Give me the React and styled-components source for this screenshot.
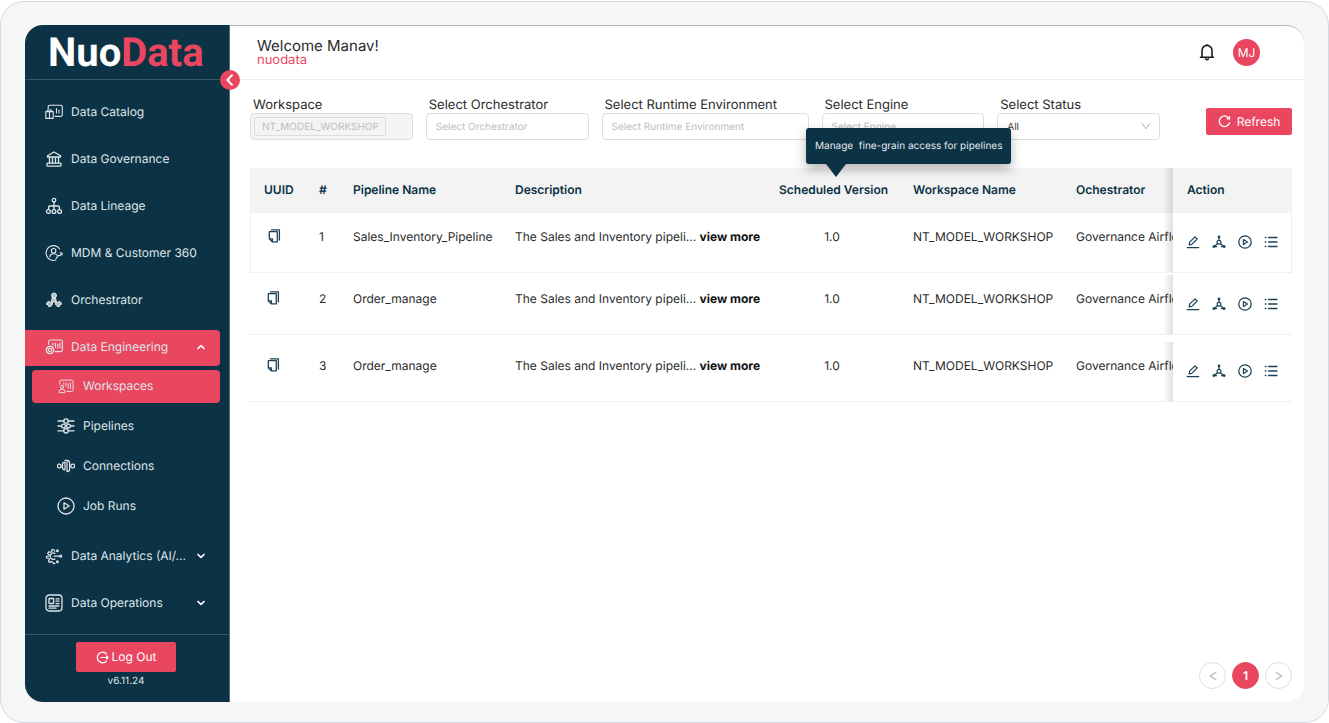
import React from 'react';
import styled, { createGlobalStyle } from 'styled-components';

const NAVY = '#0c3245';
const PINK = '#e94660';
const SIDEBAR_WIDTH = 205;
const FRAME_PADDING = 24;

const selectFields = [
  'Select Orchestrator',
  'Select Runtime Environment',
  'Select Engine',
];

const rows = [
  { id: 1, name: 'Sales_Inventory_Pipeline', gap: 0 },
  { id: 2, name: 'Order_manage', gap: 2 },
  { id: 3, name: 'Order_manage', gap: 7 },
];

/* icons */

const Icon = ({ size = 18, box = 18, stroke = 1.1, children }) => (
  <svg
    width={ size }
    height={ size }
    viewBox={ `0 0 ${ box } ${ box }` }
    fill="none"
    stroke="currentColor"
    strokeWidth={ stroke }
    strokeLinecap="round"
    strokeLinejoin="round"
    aria-hidden="true"
  >
    { children }
  </svg>
);

const CatalogIcon = () => (
  <Icon>
    <path d="M3.200 6V3.800A1.600 1.600 0 0 1 4.800 2.200H15.700A1.600 1.600 0 0 1 17.300 3.800V11.800A1.600 1.600 0 0 1 15.700 13.400H10" />
    <path d="M.8 8.600H8.200V15.400H.8ZM4.500 8.600V15.400M2.600 8.400V7H6.400V8.400" />
    <path d="M11.500 5.500V10M14 7V10" />
  </Icon>
);

const GovernanceIcon = () => (
  <Icon stroke={ 1.3 }>
    <path d="M2.500 5.800 9 2 15.500 5.800V7H2.500ZM4.500 7.200V13M13.500 7.200V13M7.500 7.200V13M10.500 7.200V13" />
    <rect x="2" y="13.200" width="14" height="3" rx=".8" />
  </Icon>
);

const LineageIcon = () => (
  <Icon stroke={ 1.3 }>
    <circle cx="9" cy="3.200" r="1.800" />
    <circle cx="3.400" cy="14.500" r="1.900" />
    <circle cx="9" cy="14.500" r="1.900" />
    <circle cx="14.600" cy="14.500" r="1.900" />
    <path d="M9 5V12.400M3.600 12.400V10.200Q3.600 9 4.800 9H13.200Q14.400 9 14.400 10.200V12.400" />
  </Icon>
);

const CustomerIcon = () => (
  <Icon>
    <path d="M14.700 5A7.400 7.400 0 1 0 10.800 16.100" />
    <path d="M11 14.600 13.500 11.300 15.200 11.600 16.800 9.200M15 8.800 17 9 17.200 11" />
    <circle cx="8.600" cy="6.800" r="2.300" />
    <path d="M4.800 12.600Q5.300 9.800 8.600 9.800 11.300 9.800 12.200 11.400" />
  </Icon>
);

const OrchestratorIcon = () => (
  <Icon stroke={ 1 }>
    <g fill="currentColor" fillOpacity=".8">
      <circle cx="9" cy="4.500" r="2.500" />
      <path d="M7.500 7H10.500L11.500 11H6.500Z" />
      <path d="M2 11.500 3.800 10.300 5.600 11.500 7.500 11.500V13.500L5.800 15.500H3.500L3 13.500H2Z" />
      <path d="M16 11.500 14.200 10.300 12.400 11.500 10.500 11.500V13.500L12.200 15.500H14.500L15 13.500H16Z" />
    </g>
  </Icon>
);

const EngineeringIcon = () => (
  <Icon>
    <path d="M3.600 6.400V3.600A1.600 1.600 0 0 1 5.200 2H15.800A1.600 1.600 0 0 1 17.400 3.600V12A1.600 1.600 0 0 1 15.800 13.600H10.200" />
    <circle cx="5" cy="12" r="3.600" strokeDasharray="1.800 .7" strokeWidth="1.400" />
    <circle cx="5" cy="12" r="1.600" />
    <path d="M8 5V7.500M10.500 5V9.500M12.800 6V10M15 5V10" />
  </Icon>
);

const WorkspaceIcon = () => (
  <Icon size={ 16 }>
    <path d="M2 7V4A1.600 1.600 0 0 1 3.600 2.400H15.400A1.600 1.600 0 0 1 17 4V13.400A1.600 1.600 0 0 1 15.400 15H10" />
    <circle cx="4.600" cy="10" r="1.700" />
    <path d="M1.400 16V14.800Q1.600 12.600 4.600 12.600 7.600 12.600 7.800 14.800V16Z" />
    <path d="M6.500 5.500V7.200M9 5.500V9M11.500 6.500V11.500M14 5.500V11.500" />
  </Icon>
);

const PipelinesIcon = () => (
  <Icon stroke={ 1.3 }>
    <circle cx="9" cy="4" r="2.200" />
    <circle cx="9" cy="13.800" r="2.200" />
    <path d="M1 4H6.800M11.200 4H17M1 13.800H6.800M11.200 13.800H17M1 9H4.300M13.700 9H17" />
    <circle cx="6.500" cy="9" r="1.900" />
    <circle cx="11.500" cy="9" r="1.900" />
  </Icon>
);

const ConnectionsIcon = () => (
  <Icon stroke={ 1.2 }>
    <circle cx="2.300" cy="9" r="1.900" />
    <circle cx="15.700" cy="9" r="1.900" />
    <path d="M4.200 9H5.400M12.600 9H13.800" />
    <path d="M8 5.200V12.800Q5.500 12.800 5.500 10.600V7.400Q5.500 5.200 8 5.200Z" />
    <path d="M8 3.400H10Q12.600 3.400 12.600 6V12Q12.600 14.600 10 14.600V3.400" />
  </Icon>
);

const PlayIcon = ({ size = 18 }) => (
  <Icon size={ size } stroke={ size < 18 ? 1.6 : 1.3 }>
    <circle cx="9" cy="9" r="8" />
    <path d="M7 5.800 12.200 9 7 12.200Z" />
  </Icon>
);

const AnalyticsIcon = () => (
  <Icon stroke={ 1.2 }>
    <path d="M9.800 4.200 8.300 2.300 6.600 3 6.900 5 5.300 5.200 3.400 4.900 2.700 6.700 4.200 7.700 3.800 9 1.500 9.300V11L3.900 11.300 4.500 12.700 3.400 14.200 4.800 15.500 6.500 14.500 7.700 15.100 8.300 16.600 10 16.400" />
    <path d="M10 6.400A3.200 3.200 0 1 0 10 12M9 9.200H14.600" />
    <circle cx="12.400" cy="3.800" r=".9" />
    <circle cx="15.700" cy="9.200" r="1" />
    <circle cx="12.400" cy="14.800" r=".9" />
  </Icon>
);

const OperationsIcon = () => (
  <Icon stroke={ 1.3 }>
    <rect x="1" y="1" width="16" height="16" rx="3.200" />
    <rect x="4" y="4.500" width="4.600" height="5" rx=".4" />
    <path d="M11 4.800H14M11 7.200H14M11 9.600H14M4 12H14M4 14.200H11" />
  </Icon>
);

const ChevronIcon = ({ d }) => (
  <Icon size={ 10 } box={ 10 } stroke={ 1.7 }>
    <path d={ d } />
  </Icon>
);

const LogoutIcon = () => (
  <Icon size={ 13 } box={ 13 } stroke={ 1.2 }>
    <path d="M10.500 2.900A5.300 5.300 0 1 0 10.500 10.100M5.200 6.500H12M10.500 5 12 6.500 10.500 8" />
  </Icon>
);

const BellIcon = () => (
  <Icon size={ 18 } stroke={ 1.6 }>
    <path d="M2.500 13.200H15.500M4 13V6.400A5 5 0 0 1 14 6.400V13M9 1.300V.8M7.600 14.800Q9 16.800 10.400 14.800" />
  </Icon>
);

const RefreshIcon = () => (
  <Icon size={ 13 } box={ 13 } stroke={ 1.3 }>
    <path d="M11.200 3.600A5.300 5.300 0 1 0 11.700 7.800M11.500 1.600V3.900H9.300" />
  </Icon>
);

const CopyIcon = () => (
  <Icon size={ 14 } box={ 14 } stroke={ 1.3 }>
    <path d="M1.300 2.700H9.300V12.900H4.300L1.300 9.900ZM1.400 9.800H4.400V12.800" />
    <path d="M3.400 .9H11.400V11" />
  </Icon>
);

const EditIcon = () => (
  <Icon size={ 14 } box={ 14 } stroke={ 1.2 }>
    <path d="M3.200 9.800 3.600 7.200 9 1.800 11.200 4 5.800 9.400ZM1.200 12.600H12.800" />
  </Icon>
);

const DeploymentIcon = () => (
  <Icon size={ 14 } box={ 14 } stroke={ 1.2 }>
    <circle cx="7" cy="2" r=".8" fill="currentColor" />
    <circle cx="7" cy="7.300" r="1.900" />
    <circle cx="1.800" cy="11.600" r=".8" fill="currentColor" />
    <circle cx="12.200" cy="11.600" r=".8" fill="currentColor" />
    <path d="M7 2.500V5.300M5.500 8.700 2.400 11.300M8.500 8.700 11.600 11.300M2 11.700H4.500M9.500 11.700H12" />
  </Icon>
);

const ListIcon = () => (
  <Icon size={ 14 } box={ 14 } stroke={ 1.3 }>
    <path d="M4.600 2.500H13M4.600 7H13M4.600 11.500H13M1.300 2.500H1.900M1.300 7H1.900M1.300 11.500H1.900" />
  </Icon>
);

const navItems = [
  { label: 'Data Catalog', icon: CatalogIcon },
  { label: 'Data Governance', icon: GovernanceIcon },
  { label: 'Data Lineage', icon: LineageIcon },
  { label: 'MDM & Customer 360', icon: CustomerIcon },
  { label: 'Orchestrator', icon: OrchestratorIcon },
  {
    label: 'Data Engineering',
    icon: EngineeringIcon,
    open: true,
    children: [
      { label: 'Workspaces', icon: WorkspaceIcon, active: true },
      { label: 'Pipelines', icon: PipelinesIcon },
      { label: 'Connections', icon: ConnectionsIcon },
      { label: 'Job Runs', icon: PlayIcon },
    ],
  },
  { label: 'Data Analytics (AI/...', icon: AnalyticsIcon, group: true },
  { label: 'Data Operations', icon: OperationsIcon, group: true },
];

const NavItem = ({ item }) => {
  const { label, icon: ItemIcon, open, group, children } = item;
  const expandable = open || group;

  return (
    <li>
      <NavLink
        as={ expandable ? 'button' : 'a' }
        href={ expandable ? undefined : '#' }
        aria-expanded={ expandable ? !!open : undefined }
        $active={ open }
      >
        <IconSlot><ItemIcon /></IconSlot>
        <span>{ label }</span>
        { expandable &&
          <NavChevron>
            <ChevronIcon d={ open ? 'M2 6.500 5 3.700 8 6.500' : 'M2 3.500 5 6.300 8 3.500' } />
          </NavChevron>
        }
      </NavLink>
      { children &&
        <SubNav>
          {
            children.map(({ label, icon: SubIcon, active }) => (
              <li key={ label }>
                <SubLink href="#" $active={ active }>
                  <IconSlot><SubIcon /></IconSlot>
                  <span>{ label }</span>
                </SubLink>
              </li>
            ))
          }
        </SubNav>
      }
    </li>
  );
};

const Sidebar = () => (
  <SidebarContainer>
    <Logo>Nuo<span>Data</span></Logo>
    <CollapseButton aria-label="Collapse menu">
      <Icon size={ 12 } box={ 12 } stroke={ 1.9 }>
        <path d="M8 1.200 3.400 6 8 10.800" />
      </Icon>
    </CollapseButton>
    <Nav>
      <NavList>
        { navItems.map(item => <NavItem key={ item.label } item={ item } />) }
      </NavList>
    </Nav>
    <SidebarFooter>
      <LogoutButton><LogoutIcon />Log Out</LogoutButton>
      <Version>v6.11.24</Version>
    </SidebarFooter>
  </SidebarContainer>
);

const Filters = () => (
  <FilterBar>
    <FilterFields>
      <Field>
        <label htmlFor="workspace">Workspace</label>
        <DisabledBox>
          <WorkspaceTag id="workspace" defaultValue="NT_MODEL_WORKSHOP" disabled />
        </DisabledBox>
      </Field>
      {
        selectFields.map(label => (
          <Field key={ label }>
            <label htmlFor={ label }>{ label }</label>
            <Select id={ label } defaultValue="" $empty>
              <option value="">{ label }</option>
            </Select>
          </Field>
        ))
      }
      <Field>
        <label htmlFor="status">Select Status</label>
        <SelectWrap>
          <Select id="status" defaultValue="All">
            <option>All</option>
          </Select>
          <Icon size={ 10 } box={ 10 } stroke={ 1 }>
            <path d="M1 2.200 5 7.800 9 2.200" />
          </Icon>
        </SelectWrap>
      </Field>
    </FilterFields>
    <RefreshButton><RefreshIcon />Refresh</RefreshButton>
  </FilterBar>
);

const PipelineTable = () => (
  <Table>
    <colgroup>
      <Col $width={ 55 } />
      <Col $width={ 34 } />
      <Col $width={ 162 } />
      <Col />
      <Col $width={ 134 } />
      <Col $width={ 163 } />
      <Col $width={ 111 } />
      <Col $width={ 119 } />
    </colgroup>
    <thead>
      <tr>
        <HeadCell>UUID</HeadCell>
        <HeadCell>#</HeadCell>
        <HeadCell>Pipeline Name</HeadCell>
        <HeadCell>Description</HeadCell>
        <HeadCell $center>
          Scheduled Version
          <Tooltip role="tooltip">{ 'Manage  fine-grain access for pipelines' }</Tooltip>
        </HeadCell>
        <HeadCell>Workspace Name</HeadCell>
        <HeadCell>Ochestrator</HeadCell>
        <HeadCell $pinned>Action</HeadCell>
      </tr>
    </thead>
    <tbody>
      {
        rows.map(({ id, name, gap }) => (
          <Row key={ id } $gap={ gap }>
            <Cell><IconButton aria-label="Copy UUID"><CopyIcon /></IconButton></Cell>
            <Cell>{ id }</Cell>
            <Cell>{ name }</Cell>
            <Cell>
              The Sales and Inventory pipeli... <ViewMore href="#">view more</ViewMore>
            </Cell>
            <Cell $center>1.0</Cell>
            <Cell>NT_MODEL_WORKSHOP</Cell>
            <Cell>Governance Airflow</Cell>
            <ActionCell>
              <Actions>
                <IconButton aria-label="Edit"><EditIcon /></IconButton>
                <IconButton aria-label="Deploy"><DeploymentIcon /></IconButton>
                <IconButton aria-label="Run"><PlayIcon size={ 14 } /></IconButton>
                <IconButton aria-label="Logs"><ListIcon /></IconButton>
              </Actions>
            </ActionCell>
          </Row>
        ))
      }
    </tbody>
  </Table>
);

const App = () => (
  <>
    <GlobalStyle />
    <Frame>
      <Window>
        <Sidebar />
        <Main>
          <Header>
            <div>
              <Welcome>Welcome Manav!</Welcome>
              <Tenant>nuodata</Tenant>
            </div>
            <HeaderActions>
              <BellButton aria-label="Notifications"><BellIcon /></BellButton>
              <Avatar>MJ</Avatar>
            </HeaderActions>
          </Header>
          <Content>
            <Filters />
            <PipelineTable />
            <Pagination aria-label="Pagination">
              <PageButton aria-label="Previous page">
                <Icon size={ 10 } box={ 10 } stroke={ 1.2 }><path d="M7.800 1.500 2.200 5 7.800 8.500" /></Icon>
              </PageButton>
              <PageButton $current>1</PageButton>
              <PageButton aria-label="Next page">
                <Icon size={ 10 } box={ 10 } stroke={ 1.2 }><path d="M2.200 1.500 7.800 5 2.200 8.500" /></Icon>
              </PageButton>
            </Pagination>
          </Content>
        </Main>
      </Window>
    </Frame>
  </>
);

export default App;

const GlobalStyle = createGlobalStyle`
  * {
    box-sizing: border-box;
  }

  body {
    margin: 0;
    background: #ffffff;
    color: #2b2b2b;
    font-family: Inter, "Liberation Sans", sans-serif;
    font-size: 12px;
    line-height: 16px;
    text-rendering: geometricPrecision;
  }

  button, input, select {
    font: inherit;
    color: inherit;
    margin: 0;
    text-rendering: inherit;
  }

  button {
    border: none;
    background: none;
    padding: 0;
    cursor: pointer;
  }

  a {
    color: inherit;
    text-decoration: none;
  }

  ul {
    list-style: none;
    margin: 0;
    padding: 0;
  }

  svg {
    display: block;
    flex: none;
  }
`;

const Frame = styled.div`
  display: flex;
  min-height: calc(100vh - 1px);
  margin-top: 1px;
  padding: ${ FRAME_PADDING - 1 }px ${ FRAME_PADDING }px 20px;
  border: 1px solid #d3dbe1;
  border-radius: 24px;
  background: #f6f6f6;
`;

const Window = styled.div`
  display: flex;
  flex: 1;
  min-width: 0;
  border-radius: 18px;
  background: #ffffff;
`;

/* sidebar */

const SidebarContainer = styled.aside`
  position: relative;
  display: flex;
  flex-direction: column;
  width: ${ SIDEBAR_WIDTH }px;
  flex: none;
  border-right: 1px solid #506b79;
  border-radius: 18px 0 0 18px;
  background: ${ NAVY };
  color: #dfe5e8;
`;

const Logo = styled.div`
  height: 55px;
  padding-left: 23px;
  border-bottom: 1px solid #365565;
  color: #ffffff;
  font-family: Roboto, "Liberation Sans", sans-serif;
  font-size: 40px;
  font-weight: 700;
  line-height: 55px;

  span {
    color: ${ PINK };
  }
`;

const CollapseButton = styled.button`
  position: absolute;
  top: 45px;
  right: -11px;
  z-index: 2;
  display: grid;
  place-items: center;
  width: 20px;
  height: 20px;
  border-radius: 50%;
  background: ${ PINK };
  color: #ffffff;
`;

const Nav = styled.nav`
  flex: 1;
  padding: 15px 9px 12px 0;
`;

const NavList = styled.ul`
  display: flex;
  flex-direction: column;
  gap: 11px;
`;

const NavLink = styled.a`
  display: flex;
  align-items: center;
  gap: 8px;
  width: 100%;
  height: 36px;
  padding: 0 14px 3px 20px;
  border-radius: 0 4px 4px 0;
  background: ${ ({ $active }) => $active ? PINK : 'transparent' };
  white-space: nowrap;
`;

const IconSlot = styled.span`
  display: grid;
  place-items: center;
  width: 18px;
`;

const NavChevron = styled.span`
  margin-left: auto;
  color: #ffffff;
`;

const SubNav = styled.ul`
  display: flex;
  flex-direction: column;
  gap: 7px;
  margin: 4px 0 5px 7px;
`;

const SubLink = styled.a`
  display: flex;
  align-items: center;
  gap: 8px;
  height: 33px;
  padding: 0 0 1px 25px;
  border-radius: 4px;
  background: ${ ({ $active }) => $active ? PINK : 'transparent' };
`;

const SidebarFooter = styled.div`
  display: flex;
  flex-direction: column;
  align-items: center;
  gap: 1px;
  padding: 7px 2px 13px 0;
  border-top: 1px solid #365565;
`;

const LogoutButton = styled.button`
  display: flex;
  align-items: center;
  justify-content: center;
  gap: 3px;
  width: 100px;
  height: 30px;
  border-radius: 2px;
  background: ${ PINK };
  color: #ffffff;
`;

const Version = styled.span`
  font-size: 10px;
`;

/* header */

const Main = styled.main`
  display: flex;
  flex-direction: column;
  flex: 1;
  min-width: 0;
  border-top: 1px solid #b9b9b9;
  border-radius: 0 18px 18px 0;
`;

const Header = styled.header`
  display: flex;
  align-items: center;
  justify-content: space-between;
  height: 54px;
  padding: 0 44px 0 27px;
  border-bottom: 1px solid #ececec;
`;

const Welcome = styled.h1`
  margin: 0;
  font-size: 15px;
  font-weight: 400;
  line-height: 15px;
`;

const Tenant = styled.div`
  color: ${ PINK };
  font-size: 13px;
  line-height: 14px;
`;

const HeaderActions = styled.div`
  display: flex;
  align-items: center;
  gap: 17px;
`;

const BellButton = styled.button`
  color: #1c1c24;
`;

const Avatar = styled.div`
  display: grid;
  place-items: center;
  width: 27px;
  height: 27px;
  border-radius: 50%;
  background: ${ PINK };
  color: #ffffff;
`;

/* filters */

const Content = styled.div`
  display: flex;
  flex-direction: column;
  flex: 1;
  padding: 17px 12px 13px 20px;
`;

const FilterBar = styled.div`
  display: flex;
  align-items: center;
  gap: 46px;
  margin-bottom: 28px;
`;

const FilterFields = styled.div`
  display: grid;
  flex: 1;
  grid-template-columns: 1fr 1fr 207px 1fr 1fr;
  gap: 13px;
`;

const Field = styled.div`
  min-width: 0;

  label {
    display: block;
    padding-left: 3px;
    font-size: 13px;
    line-height: 16px;
    white-space: nowrap;
  }
`;

const DisabledBox = styled.div`
  height: 27px;
  padding: 3px;
  border: 1px solid #dedede;
  border-radius: 4px;
  background: #f4f4f4;
`;

const WorkspaceTag = styled.input`
  display: block;
  width: 132px;
  height: 19px;
  padding: 0 7px;
  border: 1px solid #dedede;
  border-radius: 2px;
  background: #f4f4f4;
  color: #bdbdbd;
  font-size: 10px;
`;

const Select = styled.select`
  display: block;
  width: 100%;
  height: 27px;
  padding: 0 9px;
  border: 1px solid #dedede;
  border-radius: 4px;
  background: #ffffff;
  color: ${ ({ $empty }) => $empty ? '#bdbdbd' : '#444444' };
  font-size: 10px;
  appearance: none;
`;

const SelectWrap = styled.div`
  position: relative;

  svg {
    position: absolute;
    top: 8px;
    right: 9px;
    color: #b0b0b0;
    pointer-events: none;
  }
`;

const RefreshButton = styled.button`
  display: flex;
  align-items: center;
  justify-content: center;
  gap: 6px;
  width: 86px;
  height: 27px;
  margin-top: 6px;
  border-radius: 2px;
  background: ${ PINK };
  color: #ffffff;
`;

/* table */

const Table = styled.table`
  width: 100%;
  border-collapse: separate;
  border-spacing: 0;
  table-layout: fixed;
`;

const Col = styled.col`
  width: ${ ({ $width }) => $width ? `${ $width }px` : 'auto' };
`;

const pinnedShadow = `
  &::before {
    content: '';
    position: absolute;
    top: 0;
    bottom: 0;
    left: -10px;
    width: 10px;
    background: linear-gradient(to right, rgba(0, 0, 0, 0), rgba(0, 0, 0, 0.12));
  }
`;

const HeadCell = styled.th`
  position: relative;
  height: 45px;
  padding: 0 14px 1px;
  background: #f3f3f3;
  color: ${ NAVY };
  font-weight: 600;
  text-align: ${ ({ $center }) => $center ? 'center' : 'left' };
  white-space: nowrap;
  z-index: ${ ({ $center }) => $center ? 1 : 'auto' };

  ${ ({ $pinned }) => $pinned && pinnedShadow }
`;

const Tooltip = styled.span`
  position: absolute;
  bottom: calc(100% + 4px);
  left: 41px;
  padding: 10px 9px;
  border-radius: 3px;
  background: ${ NAVY };
  box-shadow: 0 5px 12px rgba(0, 0, 0, 0.3);
  color: #e3e8eb;
  font-size: 10px;
  font-weight: 400;
  white-space: pre;

  &::after {
    content: '';
    position: absolute;
    top: 100%;
    left: 20px;
    border: 10px solid transparent;
    border-top: 13px solid ${ NAVY };
    border-bottom: none;
  }
`;

const Cell = styled.td`
  padding: 16px 0 0 14px;
  padding-right: ${ ({ $center }) => $center ? 14 : 0 }px;
  border-bottom: 1px solid #f0f0f0;
  overflow: hidden;
  text-align: ${ ({ $center }) => $center ? 'center' : 'left' };
  vertical-align: top;
  white-space: nowrap;
`;

const ActionCell = styled.td`
  position: relative;
  padding: 0 0 2px;
  border-bottom: 1px solid #f0f0f0;
  vertical-align: middle;

  ${ pinnedShadow }
`;

const Row = styled.tr`
  td {
    height: ${ ({ $gap }) => 60 + $gap }px;
    border-top: ${ ({ $gap }) => $gap }px solid #ffffff;
  }

  &:first-child td:first-child {
    border-left: 1px solid #f0f0f0;
  }

  &:first-child td:last-child {
    border-right: 1px solid #f0f0f0;
  }
`;

const ViewMore = styled.a`
  color: #111111;
  font-weight: 700;
`;

const Actions = styled.div`
  display: flex;
  gap: 12px;
  padding-left: 13px;
`;

const IconButton = styled.button`
  display: block;
  margin-left: 0;
  color: #1d4257;

  ${ Cell } & {
    margin-left: 3px;
  }
`;

/* pagination */

const Pagination = styled.nav`
  display: flex;
  justify-content: flex-end;
  gap: 6px;
  margin-top: auto;
`;

const PageButton = styled.button`
  display: grid;
  place-items: center;
  width: 27px;
  height: 27px;
  border: 1px solid ${ ({ $current }) => $current ? PINK : '#dcdcdc' };
  border-radius: 50%;
  background: ${ ({ $current }) => $current ? PINK : '#ffffff' };
  color: ${ ({ $current }) => $current ? '#ffffff' : '#b5b5b5' };
  font-weight: 600;
`;
